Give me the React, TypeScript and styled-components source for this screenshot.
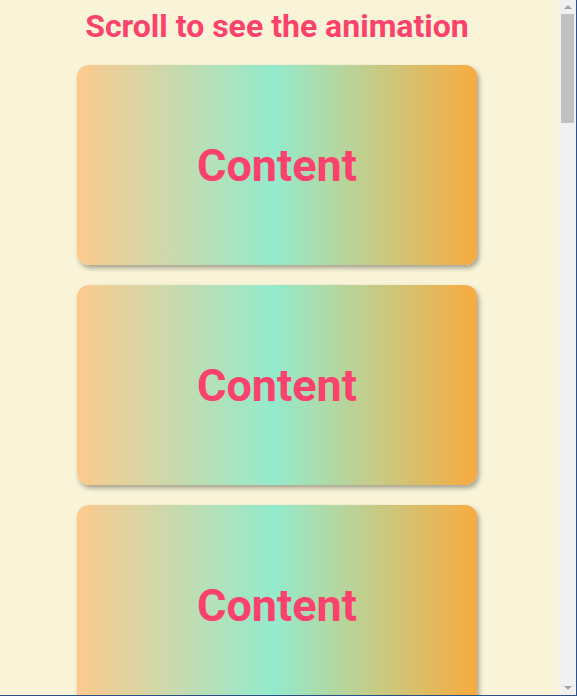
import React from "react";
import styled, { createGlobalStyle } from "styled-components";

const Global = createGlobalStyle`
  html, body {
    margin: 0;
    padding: 0;
    background: #f9f4d7;
  }
  body {
    font-family: Roboto, "Liberation Sans", sans-serif;
  }
`;

const Page = styled.main`
  padding: 9px 0 40px 77px;
`;

const Column = styled.div`
  width: 400px;
  display: flex;
  flex-direction: column;
  align-items: center;
`;

const Title = styled.h1`
  margin: 0 0 21px;
  font-size: 32px;
  font-weight: 700;
  color: #fb426c;
  white-space: nowrap;
  line-height: 35px;
`;

const Card = styled.section`
  width: 400px;
  height: 200px;
  margin-bottom: 20px;
  border-radius: 12px;
  background: linear-gradient(to right, #fdc98e 0%, #93ebcd 49%, #f8ab3f 100%);
  box-shadow: 2px 3px 5px rgba(0, 0, 0, 0.35);
  display: flex;
  align-items: center;
  justify-content: center;
`;

const CardText = styled.span`
  font-size: 45px;
  font-weight: 700;
  color: #fb426c;
  line-height: 1;
`;

const Scrollbar = styled.div`
  position: fixed;
  top: 0;
  right: 1px;
  width: 17px;
  height: 695px;
  background: #f1f1f1;
  display: flex;
  flex-direction: column;
  align-items: center;
`;

const Arrow = styled.div<{ $down?: boolean }>`
  width: 0;
  height: 0;
  margin: 5px 0;
  border-left: 4px solid transparent;
  border-right: 4px solid transparent;
  ${(p) =>
    p.$down
      ? "border-top: 4px solid #a3a3a3;"
      : "border-bottom: 4px solid #a3a3a3;"}
`;

const Thumb = styled.div`
  width: 13px;
  height: 109px;
  background: #c1c1c1;
`;

const Spacer = styled.div`
  flex: 1;
`;

const FrameRight = styled.div`
  position: fixed;
  top: 0;
  right: 0;
  width: 1px;
  height: 696px;
  background: #2b4f86;
`;

const FrameBottom = styled.div`
  position: fixed;
  left: 0;
  bottom: 0;
  width: 577px;
  height: 1px;
  background: #2b4f86;
`;

export default function App() {
  const cards = [0, 1, 2, 3, 4];
  return (
    <>
      <Global />
      <Page>
        <Column>
          <Title>Scroll to see the animation</Title>
          {cards.map((i) => (
            <Card key={i}>
              <CardText>Content</CardText>
            </Card>
          ))}
        </Column>
      </Page>
      <Scrollbar>
        <Arrow />
        <Thumb />
        <Spacer />
        <Arrow $down />
      </Scrollbar>
      <FrameRight />
      <FrameBottom />
    </>
  );
}
